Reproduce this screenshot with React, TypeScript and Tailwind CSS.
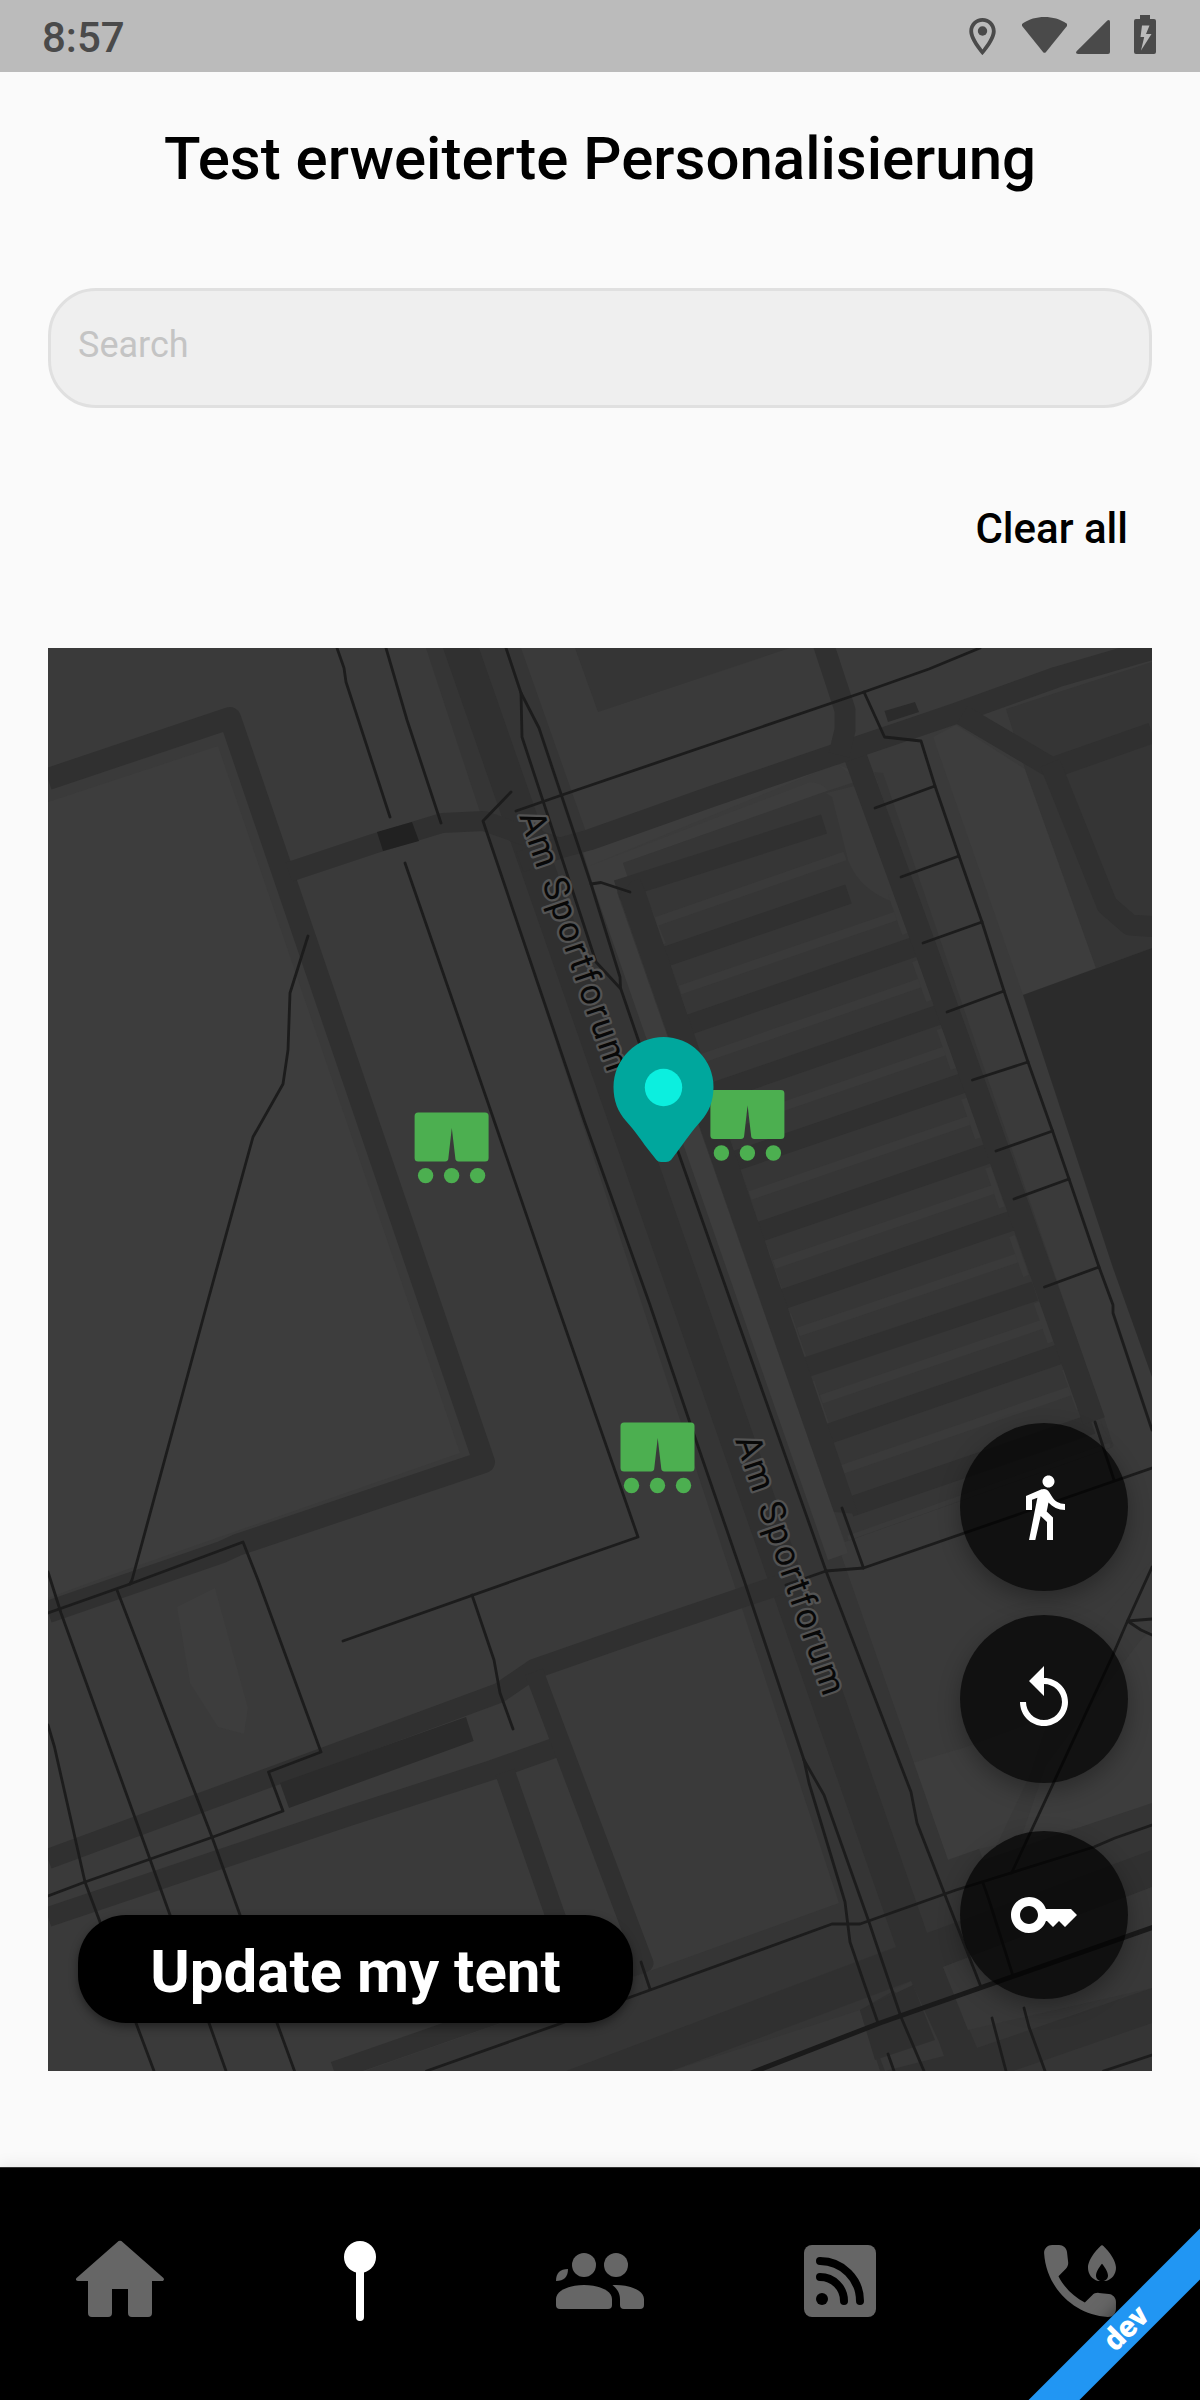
import React from "react";
import { MdDirectionsWalk, MdKey, MdReplay } from "react-icons/md";

type Pair = [number, number, number, number];

// Driving lanes of the car park: left x/y, right x/y
const lanes: Pair[] = [
  [617, 890, 824, 824],
  [644, 964, 848.5, 894],
  [688, 1025, 914, 947],
  [712, 1093, 938, 1015],
  [735, 1161, 963, 1083],
  [759, 1232, 987, 1154],
  [783.5, 1299, 1011, 1221],
  [807, 1367, 1035, 1291],
  [829.5, 1433.5, 1060, 1354],
  [850, 1507, 1092, 1424],
];

const rows = lanes.slice(2, 9).map((l, i): Pair => {
  const n = lanes[i + 3];
  return [(l[0] + n[0]) / 2, (l[1] + n[1]) / 2, (l[2] + n[2]) / 2, (l[3] + n[3]) / 2];
});
rows.unshift([677, 991, 902, 914]);

const fences = [
  "337,648 344,668 346,682 390,817",
  "386,648 407,720 441,823",
  "405,863 487,1100 557,1304 638,1537 572,1560 343,1641",
  "511,792 483,821 584,1120 650,1305 690,1423 744,1580 804,1760 809,1783 845,1902 850,1942 864,1983 878,2023",
  "804,1760 824,1795 869,1922 875,1940 901,2017 924,2071",
  "506,648 521,693 522,737 596,962 620,988",
  "521,693 539,728 591,884 620,977 620.5,988 640,1045 675,1143 732,1305 826,1571 911,1792 917,1823 945,1895 981,1987",
  "591,884 601,882.5 630,892",
  "516,811 562,795 864,692 929,669 980,648",
  "864,692 884.5,737 921,741 935,786 959,856 982,922 1004,991 1028,1062 1052.5,1131 1069,1179 1099,1267 1113,1305 1113,1313 1152,1430",
  "935,786 875,808",
  "959,856 901,877",
  "982,922 923,943",
  "1004,991 947,1012",
  "1028,1062 972.5,1080",
  "1052.5,1131 996,1151",
  "1069,1179 1014,1199",
  "1099,1267 1044.5,1287",
  "308,936 290,993 288,1050 283,1084 253,1137 207,1304 132,1580 130,1584",
  "48,1613 130,1584 243,1542 258,1580 321,1752 268.5,1772 283,1811 213,1837 85,1882 48,1896",
  "48,1572 61,1613 151,1862 170,1915 209,2023 226,2071",
  "117,1590 212,1837 240,1915 277,2023 294.5,2071",
  "48,1725 54.5,1747 85,1882 100,1922 136,2023 154,2071",
  "472,1595 494,1660 500,1693 513,1729",
  "842,1508 863.5,1568",
  "786,1585 826,1571 863.5,1568 1152,1468",
  "1095,1422 1114,1480",
  "1152,1567 1127.5,1621 1112,1657 1011.6,1873",
  "1152,1619 1127.5,1621 1141,1630 1152,1635",
  "1152,1825 1115,1838 1094,1847 956,1890 860,1924 832,1924 628,1998 562,2023 426.5,2071",
  "641,1962 650,1989",
  "983,1883 989,1900 1013,1976",
  "888,2054 894,2071",
  "992,2018 1006,2071",
  "1024,2008 1029,2027 1045,2071",
  "1103.5,2071 1152,2055",
];

const roads: [string, number][] = [
  ["48,779 230,718 484,1462 237,1545 222,1552 48,1612", 22],
  ["289,872 373,844 442,823 484,821 560,848", 20],
  ["520,862 560,848 589,840 713,796 839,753 954,714 1057,677 1170,644", 21],
  ["822,640 845,710 845,730 839,755", 21],
  ["962,715 1052,768 1152,733", 21],
  ["1050,763 1107,905 1130,925 1160,927", 21],
  ["48,1859 499,1693 534,1669 640,1632 800,1578", 20],
  ["48,1917 346,1817 492,1770 557,1747", 20],
  ["534,1672 644,1963 334,2071", 19],
  ["505,1772 555,1915 570,1955", 20],
];

function StreetLabel({ x, y }: { x: number; y: number }) {
  return (
    <text
      transform={`translate(${x} ${y}) rotate(71)`}
      textLength={272}
      fontFamily="Roboto, sans-serif"
      fontSize={35.5}
      fill="#080808"
      stroke="#535353"
      strokeWidth={4.6}
      strokeLinejoin="round"
      paintOrder="stroke"
    >
      Am Sportforum
    </text>
  );
}

function Tent({ x, y }: { x: number; y: number }) {
  return (
    <g transform={`translate(${x} ${y})`} fill="#4caf50">
      <path d="M3.5 0H70.500a3.500 3.500 0 0 1 3.500 3.500V45.500a3.500 3.500 0 0 1-3.500 3.500H44a3.500 3.500 0 0 1-3.300-3.500L37.200 15.500L33.800 45.500a3.500 3.500 0 0 1-3.300 3.500H3.500A3.500 3.500 0 0 1 0 45.500V3.500A3.500 3.500 0 0 1 3.500 0z" />
      <circle cx="11" cy="63" r="7.700" />
      <circle cx="37" cy="63" r="7.700" />
      <circle cx="63" cy="63" r="7.700" />
    </g>
  );
}

function CityMap() {
  return (
    <svg viewBox="48 648 1104 1423" className="block h-full w-full">
      <rect x="48" y="648" width="1104" height="1423" fill="#3a3a3a" />
      {/* grass and lots */}
      <g fill="#3d3d3d">
        <path d="M48 802L218 746L460 1453L97 1580L48 1598z" />
        <path d="M215 1588L177 1607L190 1683L218 1727L244 1734L248 1708z" />
        <path d="M933 737L956 725L1025 769L1096 968L1023 995z" />
        <path d="M912 1763L966 1747L1060 1712L1152 1630V1812L979 1849L948 1860z" />
      </g>
      <path d="M1068 1660L1152 1560V1625L1046 1765L1010 1870H985L1030 1775z" fill="#3a3a3a" />
      <g fill="#353535">
        <path d="M575 648L598 712L790 648z" />
        <path d="M1006 709L1152 662V948L1096 968L1025 769z" />
        <path d="M426 648H521L843 1560L948 1860L979 1849L983 1860L1152 1803V2071H365L633 1977L839 1903z" />
      </g>
      <path d="M583 852L837 764L851 770L855 782L623 863L631 887L617 892L834 1512L848 1553L828 1560L594 888z" fill="#3d3d3d" />
      <path d="M589 866L810 782Q826 783 832 797L855 873Q868 900 899 906L851 775L837 764z" fill="#3b3b3b" />
      {/* car park */}
      <path d="M623 863L824 792L855 782L1104 1418L1113 1447L845 1542L834 1512L617 892L631 887z" fill="#363636" />
      <path d="M826 793L832 797L848 860Q860 892 899 904L858 785L838 790z" fill="#3a3a3a" />
      <path d="M874 772L883 773L1114 1447L1104 1430z" fill="#363636" />
      <g stroke="#3a3a3a" fill="none">
        <path d="M652 923L845 856" strokeWidth="9" />
        <path d="M646 901L664 944" strokeWidth="4" />
        {rows.map((r, i) => (
          <g key={i}>
            <path d={`M${r[0] + 3} ${r[1] - 1}L${r[2] - 3} ${r[3] + 1}`} strokeWidth="9" />
            <path d={`M${r[0] - 6} ${r[1] - 19}L${r[0] + 9} ${r[1] + 24}`} strokeWidth="4" />
            <path d={`M${r[2] - 11} ${r[3] - 20}L${r[2] + 3} ${r[3] + 20}`} strokeWidth="6" />
          </g>
        ))}
        <path d="M848 1538L1110 1445" strokeWidth="5" />
      </g>
      <g stroke="#303030" fill="none">
        {lanes.map((l, i) => (
          <path key={i} d={`M${l[0]} ${l[1]}L${l[2]} ${l[3]}`} strokeWidth="20" />
        ))}
        <path d="M853 750L925 947L987 1120L1094 1421" strokeWidth="23" />
      </g>
      <path d="M619 895L631 882L640 879L646 893L852 1496L858 1514L834 1512z" fill="#303030" />
      {/* roads */}
      <path d="M443 648H479L927 1933L1152 1850V1887L943 1967L977 2048L1152 1988V2023L1013 2071H880L860 2010L911 1981L671 2071H566L896 1947z" fill="#303030" />
      <path d="M860 2010L671 2071H880zM943 1967L1152 1887V1988L968 2030z" fill="#383838" />
      <path d="M893 1990L911 1981L939 2042L944 2056L885 2071L873 2040L925 2021z" fill="#373737" />
      <path d="M860 2010L913 1985L935 2040L875 2060z" fill="#2f2f2f" />
      {roads.map(([points, width]) => (
        <polyline key={points} points={points} fill="none" stroke="#303030" strokeWidth={width} strokeLinejoin="round" />
      ))}
      {/* buildings */}
      <g fill="#2b2b2b">
        <path d="M1023 995L1152 948V1377L1113 1268z" />
        <path d="M884.500 711L915 702L919 712L888 722z" />
        <path d="M280 1783L466 1717L473.600 1741L289 1808z" />
      </g>
      <path d="M377 832L412 822L419 841L383 851z" fill="#212121" />
      {/* boundaries */}
      <g fill="none" stroke="#1c1c1c" strokeWidth="2.800" strokeLinejoin="round" strokeLinecap="round">
        {fences.map((points) => (
          <polyline key={points} points={points} />
        ))}
      </g>
      <path d="M751 2073L880 2023L1154 1927" fill="none" stroke="#1a1a1a" strokeWidth="5" />
      <StreetLabel x={519} y={816} />
      <StreetLabel x={735} y={1440} />
      <Tent x={414.6} y={1112.6} />
      <Tent x={710.4} y={1090} />
      <Tent x={620.500} y={1422.500} />
      <path
        d="M663.500 1037A50 50 0 0 1 713.500 1087C713.500 1101 709 1112 701 1121C692 1131 686 1140 680 1148L671 1160Q669 1162 666 1162H661Q658 1162 656.500 1160L647 1148C641 1140 635 1131 626 1121C618 1112 613.500 1101 613.500 1087A50 50 0 0 1 663.500 1037z"
        fill="#00a79d"
      />
      <circle cx="663.500" cy="1087.500" r="18.700" fill="#0cefdf" />
    </svg>
  );
}

function RoundButton({ children }: { children: React.ReactNode }) {
  return (
    <button className="flex size-[168px] items-center justify-center rounded-full bg-black/70 text-[72px] text-white shadow-[0_8px_22px_rgba(0,0,0,0.3)]">
      {children}
    </button>
  );
}

function StatusBar() {
  return (
    <header className="flex h-[72px] shrink-0 items-center justify-between bg-[#bbbbbb] pr-[44px] pl-[42px] text-[#4a4a4a]">
      <span className="pt-[4px] text-[42px] leading-none font-medium">8:57</span>
      <div className="flex h-full fill-current">
        <svg viewBox="969 0 27 72" className="mr-[26px] h-full w-[27px]">
          <path
            fillRule="evenodd"
            d="M982.500 18c7.300 0 13.200 5.900 13.200 13.200C995.700 41 982.500 55 982.500 55S969.300 41 969.300 31.200C969.300 23.900 975.200 18 982.500 18zM982.500 21.700c-5.200 0-9.400 4.200-9.400 9.400 0 5.300 5.300 13.200 9.400 18.400 4.100-5.200 9.400-13.100 9.400-18.400 0-5.200-4.200-9.400-9.400-9.400z"
          />
          <circle cx="982.500" cy="31" r="4.700" />
        </svg>
        <svg viewBox="1022 0 45 72" className="mr-[9px] h-full w-[45px]">
          <path d="M1022.600 23.400C1035 14.800 1054 14.800 1066.600 23.400Q1068 24.700 1066.800 26.200L1046 52Q1044.500 53.700 1043 52L1022.300 26.200Q1021.200 24.700 1022.600 23.400z" />
        </svg>
        <svg viewBox="1076 0 34 72" className="mr-[24px] h-full w-[34px]">
          <path d="M1076.600 51.300L1107.400 20.400Q1110 19 1110 22V52Q1110 54 1108 54H1078Q1075 54 1076.600 51.300z" />
        </svg>
        <svg viewBox="1134 0 22 72" className="h-full w-[22px]">
          <path fillRule="evenodd" d="M1140 15H1150V19H1154Q1156 19 1156 21V52Q1156 54 1154 54H1136Q1134 54 1134 52V21Q1134 19 1136 19H1140zM1142 25.500L1140.500 37H1144.200L1141 50.500L1151.500 34H1146L1149.500 25.500z" />
        </svg>
      </div>
    </header>
  );
}

const navIcons = [
  {
    label: "Home",
    color: "text-[#666666]",
    art: (
      <path d="M12.700 2.300L22.800 11.200c.4.300.1.800-.3.800H20v8a1 1 0 0 1-1 1h-4a1 1 0 0 1-1-1v-6h-4v6a1 1 0 0 1-1 1H5a1 1 0 0 1-1-1v-8H1.500c-.5 0-.7-.5-.3-.8L11.300 2.300a1 1 0 0 1 1.400 0z" />
    ),
  },
  {
    label: "Map",
    color: "text-white",
    art: (
      <>
        <circle cx="12" cy="6" r="4" />
        <rect x="11" y="8" width="2" height="14" rx="1" />
      </>
    ),
  },
  {
    label: "Friends",
    color: "text-[#666666]",
    art: (
      <>
        <circle cx="8" cy="8" r="3" />
        <circle cx="16" cy="8" r="3" />
        <path d="M1 12c0-2 1-3 3-3 0 2-1 3-3 3z" />
        <path d="M8 13c3.500 0 7 1.300 7 3.500V18a1 1 0 0 1-1 1H2a1 1 0 0 1-1-1v-1.500C1 14.300 4.500 13 8 13z" />
        <path d="M15.100 13.050C19 12.800 23 14.200 23 16.500V18a1 1 0 0 1-1 1h-4a1 1 0 0 1-1-1v-1.500c0-1.400-.7-2.600-1.900-3.450z" />
      </>
    ),
  },
  {
    label: "News",
    color: "text-[#666666]",
    art: (
      <>
        <rect x="3" y="3" width="18" height="18" rx="2" />
        <circle cx="7.500" cy="16.500" r="1.500" fill="#000" />
        <path d="M7 11a6 6 0 0 1 6 6M7 7a10 10 0 0 1 10 10" fill="none" stroke="#000" strokeWidth="2" strokeLinecap="round" />
      </>
    ),
  },
  {
    label: "Emergency",
    color: "text-[#666666]",
    art: (
      <>
        <path d="M19.230 15.260l-2.540-.290c-.610-.070-1.210.140-1.640.570l-1.840 1.840c-2.830-1.440-5.150-3.750-6.590-6.590l1.850-1.850c.430-.430.640-1.030.570-1.640l-.290-2.520C8.630 3.770 7.780 3.010 6.760 3.010H5.030c-1.130 0-2.070.940-2 2.070.530 8.540 7.360 15.360 15.890 15.890 1.130.070 2.070-.870 2.070-2v-1.730c.010-1.010-.750-1.860-1.760-1.980z" />
        <path fillRule="evenodd" d="M17.500 3C18.200 3.400 21 6.400 21 8.700C21 10.300 20 11.600 18.500 12H16.500C15 11.600 14 10.300 14 8.700C14 6.400 16.800 3.400 17.500 3zM17.500 7.700C17.100 8.100 16 9.700 16 10.600C16 11.400 16.600 12 17.500 12S19 11.400 19 10.600C19 9.700 17.900 8.100 17.500 7.700z" />
      </>
    ),
  },
];

export default function App() {
  return (
    <div className="flex h-[2400px] w-[1200px] flex-col overflow-hidden bg-[#fafafa] font-['Roboto',sans-serif] text-black">
      <StatusBar />
      <main className="flex flex-1 flex-col px-12">
        <h1 className="mt-[52px] text-center text-[60px] leading-[70px] font-medium">Test erweiterte Personalisierung</h1>
        <div className="mt-[94px] flex h-[120px] items-center rounded-[48px] border-[3px] border-[#e0e0e0] bg-[#efefef] px-[27px] pb-[6px] text-[36px] text-[#c4c4c4]">
          Search
        </div>
        <div className="mt-[96px] flex justify-end pr-[24px]">
          <button className="text-[42px] leading-[50px] font-medium">Clear all</button>
        </div>
        <section className="relative mt-[94px] h-[1423px] w-[1104px] shrink-0 overflow-hidden">
          <CityMap />
          <button className="absolute bottom-[48px] left-[30px] h-[108px] w-[555px] rounded-[48px] bg-black pt-[5px] text-[60px] leading-none font-bold text-white shadow-[0_4px_10px_rgba(0,0,0,0.4)]">
            Update my tent
          </button>
          <div className="absolute right-[24px] bottom-[72px] flex flex-col">
            <RoundButton>
              <MdDirectionsWalk />
            </RoundButton>
            <div className="h-6" />
            <RoundButton>
              <MdReplay />
            </RoundButton>
            <div className="h-12" />
            <RoundButton>
              <MdKey />
            </RoundButton>
          </div>
        </section>
      </main>
      <nav className="relative h-[233px] shrink-0 shadow-[0_0_16px_rgba(0,0,0,0.1)]">
        <div className="relative flex h-full overflow-hidden border-t border-[#333333] bg-black">
          {navIcons.map((item) => (
            <button key={item.label} aria-label={item.label} className={`flex flex-1 items-start justify-center pt-[65px] ${item.color}`}>
              <svg viewBox="0 0 24 24" className="size-[96px] fill-current">
                {item.art}
              </svg>
            </button>
          ))}
          <div className="absolute top-[142px] left-[976px] flex h-[36px] w-[300px] -rotate-45 items-center justify-center bg-[#2196f3] text-[30.600px] leading-none font-black text-white shadow-[0_0_18px_rgba(0,0,0,0.5)]">
            dev
          </div>
        </div>
      </nav>
    </div>
  );
}
